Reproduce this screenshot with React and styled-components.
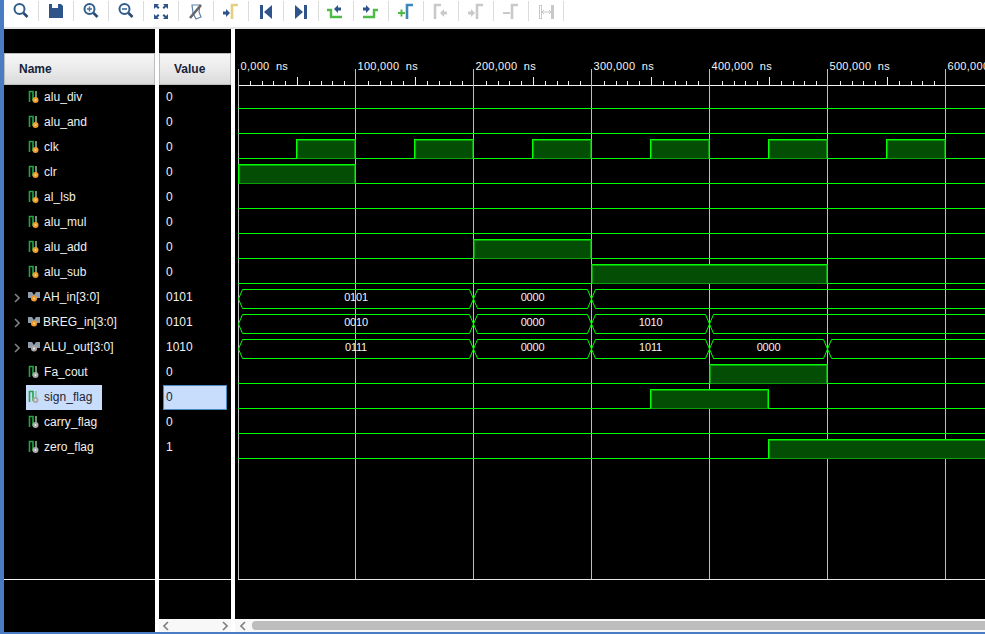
import React from 'react';
import styled, { createGlobalStyle } from 'styled-components';

const GlobalStyle = createGlobalStyle`
  html, body {
    margin: 0;
    padding: 0;
    background: #fff;
  }
`;

const Page = styled.div`
  width: 985px;
  height: 634px;
  box-sizing: border-box;
  border-left: 4px solid #4a7cc6;
  border-bottom: 2px solid #4a7cc6;
  display: flex;
  flex-direction: column;
  overflow: hidden;
  background: #fff;
  font-family: "Liberation Sans", Arial, sans-serif;
  font-size: 12px;
`;

const Toolbar = styled.div`
  height: 27px;
  flex: none;
  display: flex;
  align-items: flex-start;
  border-bottom: 2px solid #e6e6e6;
  background: #fff;
`;

const ToolButton = styled.div`
  width: 35px;
  height: 20px;
  margin-top: 1px;
  box-sizing: border-box;
  flex: none;
  display: flex;
  align-items: center;
  justify-content: center;
  border-right: 1px solid #dcdcdc;
`;

const Panes = styled.div`
  flex: 1;
  min-height: 0;
  display: flex;
  gap: 4px;
`;

const Pane = styled.div`
  width: ${(p) => p.$width}px;
  flex: none;
  display: flex;
  flex-direction: column;
  background: #000;
`;

const WavePane = styled.div`
  flex: 1;
  min-width: 0;
  display: flex;
  flex-direction: column;
  background: #000;
`;

const TopSpacer = styled.div`
  height: 24px;
  flex: none;
`;

const Header = styled.div`
  height: 32px;
  flex: none;
  box-sizing: border-box;
  display: flex;
  align-items: center;
  padding-left: ${(p) => p.$pad}px;
  font-weight: 700;
  color: #16233a;
  background: linear-gradient(180deg, #f7f7f7 0%, #e9e9e9 55%, #dadada 100%);
  border: 1px solid #bdbdbd;
`;

const List = styled.div`
  height: 495px;
  flex: none;
  box-sizing: border-box;
  border-bottom: 1px solid #f2f2f2;
`;

const Row = styled.div`
  height: 25px;
  display: flex;
  align-items: stretch;
  color: #f0f0f0;
`;

const ExpandSlot = styled.div`
  width: 22px;
  flex: none;
  box-sizing: border-box;
  padding-left: 10px;
  display: flex;
  align-items: center;
`;

const NameCell = styled.div`
  display: flex;
  align-items: center;
  box-sizing: border-box;
  padding: 0 9px 2px 2px;
  background: ${(p) => (p.$selected ? '#c8dcfb' : 'transparent')};
  color: ${(p) => (p.$selected ? '#1c2431' : '#f0f0f0')};
  letter-spacing: 0.05px;
`;

const SignalIcon = styled.svg`
  flex: none;
  margin-right: ${(p) => (p.$bus ? 3 : 4)}px;
`;

const ValueCell = styled.div`
  width: 64px;
  margin-left: 4px;
  box-sizing: border-box;
  display: flex;
  align-items: center;
  padding: 0 0 2px 2px;
  background: ${(p) => (p.$selected ? '#c8dcfb' : 'transparent')};
  border: 1px solid ${(p) => (p.$selected ? '#4a8ac0' : 'transparent')};
  color: ${(p) => (p.$selected ? '#1c2431' : '#f0f0f0')};
`;

const Footer = styled.div`
  flex: 1;
`;

const ScrollBar = styled.div`
  height: 13px;
  flex: none;
  display: flex;
  align-items: center;
  justify-content: ${(p) => (p.$spread ? 'space-between' : 'flex-start')};
  gap: 6px;
  padding: 0 3px 0 ${(p) => (p.$spread ? 4 : 5)}px;
  background: #f8f8f8;
`;

const ScrollThumb = styled.div`
  flex: 1;
  height: 9px;
  margin-right: -4px;
  border-radius: 4px 0 0 4px;
  background: #bdbdbd;
`;

const WaveSvg = styled.svg`
  display: block;
  flex: none;
`;

const BusLabel = styled.text`
  font-family: "Liberation Sans", Arial, sans-serif;
  font-size: 11px;
  letter-spacing: -0.2px;
  fill: #f4f4f4;
`;

const RulerLabel = styled.text`
  font-family: "Liberation Sans", Arial, sans-serif;
  font-size: 11px;
  letter-spacing: 0.3px;
  word-spacing: 3px;
  fill: #f4f4f4;
`;

const NAVY = '#2f5489';
const GREEN = '#4dbb46';
const GRAY = '#c9c9c9';

const arrowR = (x, y, c) => <path d={`M${x} ${y - 1.5}h3v-2.5l4 4-4 4v-2.5h-3z`} fill={c} />;
const arrowL = (x, y, c) => <path d={`M${x + 7} ${y - 1.5}h-3v-2.5l-4 4 4 4v-2.5h3z`} fill={c} />;
const edge = (x, c) => <path d={`M${x + 1} 18V4h6`} fill="none" stroke={c} strokeWidth="2.6" />;

const lens = (inner) => (
  <>
    <circle cx="8.5" cy="8" r="5" fill="none" stroke="#2f5d8c" strokeWidth="2" />
    <path d="M12.5 12l4 4" stroke="#2b4a78" strokeWidth="2.6" />
    {inner}
  </>
);

const TOOL_ICONS = [
  lens(null),
  <path d="M3 3h3v4h6V3h1v4h-1 1V3h2l2 2v12H3z" fill={NAVY} />,
  lens(<path d="M6 8h5M8.5 5.5v5" stroke="#3f6f9c" strokeWidth="1.4" />),
  lens(<path d="M6 8h5" stroke="#3f6f9c" strokeWidth="1.6" />),
  <path
    d="M3 3h5L6.5 4.6 8.5 6.6 7 8 5 6 3 8zM17 3h-5l1.500 1.600-2 2L13 8l2-2 2 2zM3 18h5l-1.500-1.600 2-2L7 13l-2 2-2-2zM17 18h-5l1.500-1.600-2-2L13 13l2 2 2-2z"
    fill={NAVY}
  />,
  <>
    <path d="M6 4l8 0-1 7 2 5-5 2-3-6z" fill="none" stroke="#5f83ad" strokeWidth="1.2" />
    <path d="M4 17L15 4" stroke="#666" strokeWidth="2.6" />
  </>,
  <>
    {arrowR(2, 12, NAVY)}
    {edge(10, '#e6cf80')}
  </>,
  <>
    <rect x="4" y="4" width="3" height="14" fill={NAVY} />
    <path d="M16 4v14l-8-7z" fill={NAVY} />
  </>,
  <>
    <path d="M4 4v14l8-7z" fill={NAVY} />
    <rect x="13" y="4" width="3" height="14" fill={NAVY} />
  </>,
  <>
    <path d="M1 9h4v7h11" fill="none" stroke={GREEN} strokeWidth="2.4" />
    {arrowL(8, 8, NAVY)}
  </>,
  <>
    <path d="M2 16h11V9h4" fill="none" stroke={GREEN} strokeWidth="2.4" />
    {arrowR(2, 8, NAVY)}
  </>,
  <>
    <path d="M2 12h7M5.500 8.500v7" stroke={GREEN} strokeWidth="2" />
    {edge(10, '#3d87ba')}
  </>,
  <>
    {edge(3, GRAY)}
    {arrowL(9, 12, GRAY)}
  </>,
  <>
    {arrowR(2, 12, GRAY)}
    {edge(10, GRAY)}
  </>,
  <>
    <path d="M2 12h7" stroke={GRAY} strokeWidth="2" />
    {edge(10, GRAY)}
  </>,
  <>
    <rect x="3.500" y="4.500" width="2" height="13" fill="none" stroke={GRAY} />
    <rect x="15" y="4" width="3" height="14" fill={GRAY} />
    <path d="M6 11h9M8 9l-2 2 2 2M13 9l2 2-2 2" fill="none" stroke={GRAY} />
  </>,
];

const SIGNALS = [
  { name: 'alu_div', value: '0', dot: 'in' },
  { name: 'alu_and', value: '0', dot: 'in' },
  { name: 'clk', value: '0', dot: 'in' },
  { name: 'clr', value: '0', dot: 'in' },
  { name: 'al_lsb', value: '0', dot: 'in' },
  { name: 'alu_mul', value: '0', dot: 'in' },
  { name: 'alu_add', value: '0', dot: 'in' },
  { name: 'alu_sub', value: '0', dot: 'in' },
  { name: 'AH_in[3:0]', value: '0101', dot: 'in', bus: true },
  { name: 'BREG_in[3:0]', value: '0101', dot: 'in', bus: true },
  { name: 'ALU_out[3:0]', value: '1010', dot: 'out', bus: true },
  { name: 'Fa_cout', value: '0', dot: 'out' },
  { name: 'sign_flag', value: '0', dot: 'out', selected: true },
  { name: 'carry_flag', value: '0', dot: 'out' },
  { name: 'zero_flag', value: '1', dot: 'out' },
];

// grid x position of a time given in units of 100 ns
const tx = (t) => (t === 0 ? 238 : 355 + Math.round((t - 1) * 118));
const END = 750;
const OX = 235; // page x of the wave pane
const OY = 29; // page y of the wave pane

const HIGHS = {
  2: [[0.5, 1], [1.5, 2], [2.5, 3], [3.5, 4], [4.5, 5], [5.5, 6]],
  3: [[0, 1]],
  6: [[2, 3]],
  7: [[3, 5]],
  11: [[4, 5]],
  12: [[3.5, 4.5]],
  14: [[4.5, 7]],
};

const BUSES = {
  8: [[0, 2, '0101'], [2, 3, '0000'], [3, 7, '']],
  9: [[0, 2, '0010'], [2, 3, '0000'], [3, 4, '1010'], [4, 7, '']],
  10: [[0, 2, '0111'], [2, 3, '0000'], [3, 4, '1011'], [4, 5, '0000'], [5, 7, '']],
};

const halfX = (t) => {
  const whole = Math.floor(t);
  if (t === whole) return tx(t);
  return whole === 0 ? 296 : tx(whole) + 59;
};

function ScalarWave({ index }) {
  const low = 108 + 25 * index - OY + 0.5;
  const high = low - 19;
  const spans = HIGHS[index] || [];
  let d = `M${238 - OX} ${low}`;
  spans.forEach(([a, b]) => {
    const x1 = halfX(a) - OX + 0.5;
    const x2 = Math.min(halfX(b) - OX + 0.5, END);
    d += `L${x1} ${low}L${x1} ${high}L${x2} ${high}L${x2} ${low}`;
  });
  d += `L${END} ${low}`;
  return (
    <g>
      {spans.map(([a, b]) => {
        const x1 = halfX(a) - OX + 0.5;
        const x2 = Math.min(halfX(b) - OX + 0.5, END + 4);
        return (
          <rect
            key={a}
            x={x1 + 1}
            y={high + 1}
            width={x2 - x1 - 2}
            height={18}
            fill="#044d04"
            stroke="#0aa00a"
            strokeWidth="1"
          />
        );
      })}
      <path d={d} fill="none" stroke="#00ff00" strokeWidth="1" shapeRendering="crispEdges" />
    </g>
  );
}

function BusWave({ index }) {
  const top = 289 + 25 * (index - 8) - OY + 0.5;
  const bot = top + 19;
  const mid = (top + bot) / 2;
  const segs = BUSES[index];
  return (
    <g>
      {segs.map(([a, b, label]) => {
        const x1 = tx(a) - OX + 0.5;
        const x2 = tx(b) - OX + 0.5;
        const d = `M${x1} ${mid}L${x1 + 4} ${top}L${x2 - 4} ${top}L${x2} ${mid}L${x2 - 4} ${bot}L${x1 + 4} ${bot}Z`;
        return (
          <g key={a}>
            <path d={d} fill="none" stroke="#00ff00" strokeWidth="1" />
            {label && (
              <BusLabel x={(x1 + x2) / 2} y={top + 11} textAnchor="middle">
                {label}
              </BusLabel>
            )}
          </g>
        );
      })}
    </g>
  );
}

function Ruler() {
  const ticks = [];
  for (let i = 1; i < 60; i++) {
    if (i % 10 === 0) continue;
    const x = Math.round(238 + (i * 118) / 10) - OX + 0.5;
    const big = i % 5 === 0;
    ticks.push(<line key={i} x1={x} x2={x} y1={big ? 48 : 52} y2={56} stroke="#f0f0f0" />);
  }
  return (
    <g>
      <line x1={3} x2={END} y1={56.5} y2={56.5} stroke="#f4f4f4" />
      {ticks}
      {[0, 1, 2, 3, 4, 5, 6].map((t) => (
        <g key={t}>
          <line x1={tx(t) - OX + 0.5} x2={tx(t) - OX + 0.5} y1={40} y2={550} stroke="#bdbdbd" />
          <RulerLabel x={tx(t) - OX + 2.5} y={41}>
            {t === 0 ? '0,000 ns' : `${t}00,000 ns`}
          </RulerLabel>
        </g>
      ))}
      <line x1={3} x2={END} y1={550.5} y2={550.5} stroke="#e6e6e6" />
    </g>
  );
}

function Icon({ bus, dot }) {
  const fill = dot === 'in' ? '#f09a2a' : '#a9a9a9';
  if (bus) {
    return (
      <SignalIcon $bus width="12" height="12" viewBox="0 0 12 12">
        <path d="M0 1h4l2 3 2-3h4v6H9L6 10 3 7H0z" fill="#8f9daa" />
        <circle cx="6" cy="7.500" r="3" fill={fill} />
        <circle cx="6" cy="7.500" r="1" fill={dot === 'in' ? '#ffd59a' : '#eeeeee'} />
      </SignalIcon>
    );
  }
  return (
    <SignalIcon width="12" height="14" viewBox="0 0 12 14">
      <path d="M1.500 12V1.500H5V11" fill="none" stroke="#22a544" strokeWidth="1.600" />
      <path d="M8 1v7" stroke="#8fc29a" strokeWidth="1.500" />
      <circle cx="7.500" cy="10" r="3" fill={fill} />
      <circle cx="7.500" cy="10" r="1" fill={dot === 'in' ? '#ffd59a' : '#eeeeee'} />
    </SignalIcon>
  );
}

function Chevron({ left }) {
  return (
    <svg width="6" height="10" viewBox="0 0 6 10">
      <path d={left ? 'M5 1L1 5l4 4' : 'M1 1l4 4-4 4'} fill="none" stroke="#808080" strokeWidth="1.600" />
    </svg>
  );
}

export default function App() {
  return (
    <Page>
      <GlobalStyle />
      <Toolbar>
        {TOOL_ICONS.map((icon, i) => (
          <ToolButton key={i}>
            <svg width="20" height="20" viewBox="0 0 20 20">
              {icon}
            </svg>
          </ToolButton>
        ))}
      </Toolbar>
      <Panes>
        <Pane $width={151}>
          <TopSpacer />
          <Header $pad={14}>Name</Header>
          <List>
            {SIGNALS.map((s) => (
              <Row key={s.name}>
                <ExpandSlot>{s.bus && <Chevron />}</ExpandSlot>
                <NameCell $selected={s.selected}>
                  <Icon bus={s.bus} dot={s.dot} />
                  {s.name}
                </NameCell>
              </Row>
            ))}
          </List>
          <Footer />
        </Pane>
        <Pane $width={72}>
          <TopSpacer />
          <Header $pad={14}>Value</Header>
          <List>
            {SIGNALS.map((s) => (
              <Row key={s.name}>
                <ValueCell $selected={s.selected}>{s.value}</ValueCell>
              </Row>
            ))}
          </List>
          <Footer />
          <ScrollBar $spread>
            <Chevron left />
            <Chevron />
          </ScrollBar>
        </Pane>
        <WavePane>
          <WaveSvg width="750" height="590" viewBox="0 0 750 590">
            <Ruler />
            {SIGNALS.map((s, i) =>
              s.bus ? <BusWave key={s.name} index={i} /> : <ScalarWave key={s.name} index={i} />
            )}
          </WaveSvg>
          <ScrollBar>
            <Chevron left />
            <ScrollThumb />
          </ScrollBar>
        </WavePane>
      </Panes>
    </Page>
  );
}
